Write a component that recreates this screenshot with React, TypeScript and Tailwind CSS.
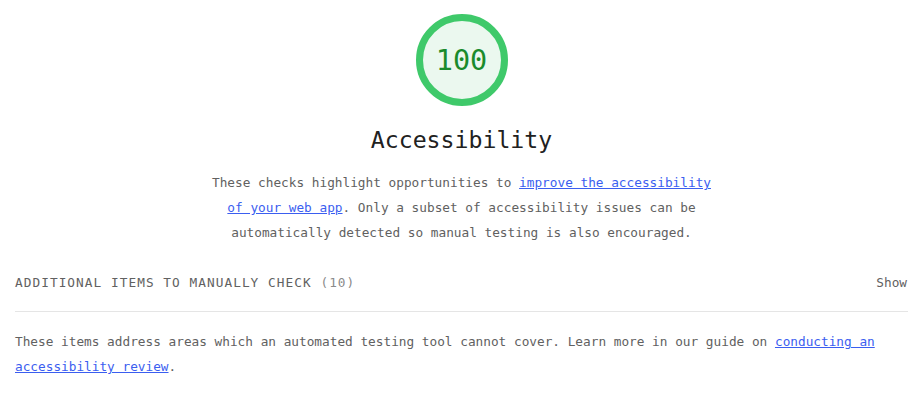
const mono = "font-['DejaVu_Sans_Mono','Liberation_Mono',monospace]";

function Gauge({ score }: { score: number }) {
  return (
    <div className="relative h-[92px] w-[92px]">
      <svg viewBox="0 0 92 92" className="absolute inset-0 h-full w-full">
        <circle cx="46" cy="46" r="42.5" fill="#ebf8ef" stroke="#3fc96a" strokeWidth="7" />
      </svg>
      <div className="relative flex h-full w-full items-center justify-center pt-[2px] text-[28.5px] leading-none text-[#1a8b2c]">
        {score}
      </div>
    </div>
  );
}

export default function App() {
  return (
    <div className={`${mono} min-h-[404px] bg-white text-[12.75px] text-[#616161]`}>
      <div className="flex flex-col items-center pt-[14px]">
        <Gauge score={100} />
        <h2 className="mt-[20px] text-[23.2px] leading-[28px] text-[#212121]">Accessibility</h2>
        <p className="mt-[16px] max-w-[510px] text-center leading-[25px]">
          These checks highlight opportunities to{" "}
          <a href="#" className="text-[#3b5ef0] underline">
            improve the accessibility of your web app
          </a>
          . Only a subset of accessibility issues can be automatically detected so manual testing is also encouraged.
        </p>
      </div>

      <div className="mx-[15px] mt-[28px] flex items-center justify-between border-b border-[#e5e5e5] pb-[18px] leading-[20px]">
        <span className="uppercase tracking-[1.05px] text-[#616161]">
          Additional items to manually check <span className="text-[#8a8a8a]">(10)</span>
        </span>
        <span className="mr-px text-[#616161]">Show</span>
      </div>

      <p className="mx-[15px] mt-[17px] leading-[25px]">
        These items address areas which an automated testing tool cannot cover. Learn more in our guide on{" "}
        <a href="#" className="text-[#3b5ef0] underline">
          conducting an accessibility review
        </a>
        .
      </p>
    </div>
  );
}
